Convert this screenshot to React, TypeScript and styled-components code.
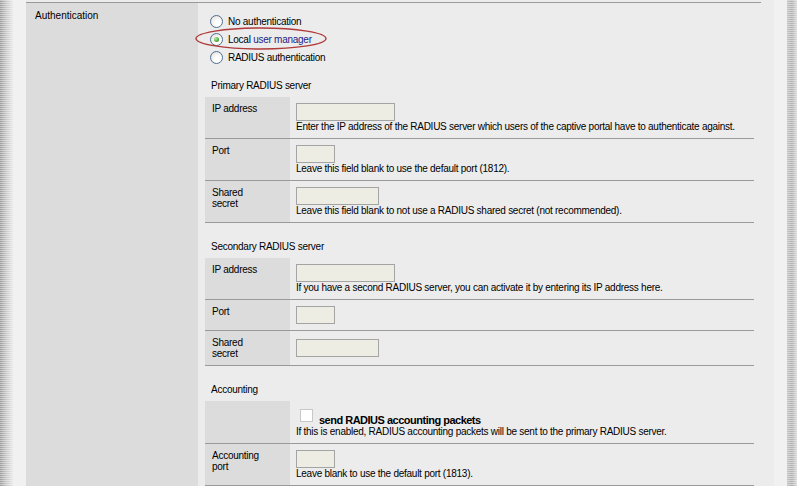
import styled, { createGlobalStyle } from "styled-components";

const GlobalStyle = createGlobalStyle`
  html, body {
    margin: 0;
    padding: 0;
    background: #ececec;
  }
  body {
    font-family: "Liberation Sans", Arial, sans-serif;
    font-size: 10px;
    line-height: 11px;
    letter-spacing: -0.26px;
    color: #000;
  }
`;

const Page = styled.div`
  display: flex;
  height: 486px;
  overflow: hidden;
`;

const Stripe = styled.div<{ $side: "left" | "right" }>`
  flex: none;
  width: ${(p) => (p.$side === "left" ? 13 : 10)}px;
  background: repeating-linear-gradient(
      to bottom,
      rgba(255, 255, 255, 0.4) 0 1px,
      rgba(255, 255, 255, 0) 1px 2px
    ),
    ${(p) =>
      p.$side === "left"
        ? "linear-gradient(to right, #9c9c9c, #c6c6c6 45%, #e8e8e8)"
        : "linear-gradient(to right, #c4c4c4, #b2b2b2 50%, #dadada)"};
`;

const Gutter = styled.div`
  flex: none;
  width: 13px;
  background: #f1f1f1;
`;

const Main = styled.div`
  flex: 1;
  padding: 2px 13px 0 0;
`;

const FormRow = styled.div`
  display: grid;
  grid-template-columns: 172px 1fr;
  border-top: 1px solid #9a9a9a;
`;

const FieldName = styled.div`
  background: #dcdcdc;
  padding: 7px 9px;
  letter-spacing: 0;
`;

const FieldBody = styled.div`
  padding: 9px 7px 0;
`;

const RadioGroup = styled.div`
  position: relative;
`;

const RadioRow = styled.label`
  display: flex;
  align-items: center;
  gap: 5px;
  height: 18px;
  padding-left: 5px;
`;

const RadioDot = styled.span<{ $checked?: boolean }>`
  flex: none;
  width: 13px;
  height: 13px;
  box-sizing: border-box;
  border-radius: 50%;
  border: 1px solid #4d6f93;
  background: radial-gradient(circle at 65% 70%, #ffffff 30%, #dedbd2 100%);
  display: flex;
  align-items: center;
  justify-content: center;

  &::after {
    content: "";
    display: ${(p) => (p.$checked ? "block" : "none")};
    width: 5px;
    height: 5px;
    border-radius: 50%;
    background: radial-gradient(circle at 35% 35%, #b6f0a6, #3c9e2e 70%);
  }
`;

const Link = styled.span`
  color: #1e1e86;
`;

const Highlight = styled.svg`
  position: absolute;
  left: -10px;
  top: 15px;
  overflow: visible;
`;

const SectionTitle = styled.div<{ $gap: number }>`
  margin: ${(p) => p.$gap}px 0 6px 6px;
`;

const InnerTable = styled.div`
  display: flex;
  flex-direction: column;
`;

const InnerRow = styled.div`
  display: grid;
  grid-template-columns: 85px 1fr;
  border-bottom: 1px solid #9a9a9a;
`;

const RowLabel = styled.div`
  background: #dcdcdc;
  padding: 6px 7px;
`;

const RowValue = styled.div`
  padding: 6px;
  display: flex;
  flex-direction: column;
  justify-content: center;
  align-items: flex-start;
`;

const TextInput = styled.input<{ $w: number }>`
  width: ${(p) => p.$w}px;
  height: 18px;
  box-sizing: border-box;
  margin: 0;
  border: 1px solid #a4a4a4;
  background: #eeede4;
  font: inherit;
`;

const Hint = styled.div`
  white-space: nowrap;
`;

const CheckLine = styled.div`
  display: flex;
  align-items: flex-end;
  gap: 6px;
  height: 19px;
  padding-left: 4px;
`;

const CheckBox = styled.span`
  flex: none;
  width: 13px;
  height: 13px;
  box-sizing: border-box;
  margin-bottom: 4px;
  border: 1px solid #c8c8c8;
  background: #fff;
`;

const CheckText = styled.span`
  font-weight: bold;
  font-size: 11px;
  line-height: 12px;
  letter-spacing: -0.5px;
`;

type Row = {
  label: string[];
  width: number;
  hint?: string;
};

const primary: Row[] = [
  {
    label: ["IP address"],
    width: 99,
    hint: "Enter the IP address of the RADIUS server which users of the captive portal have to authenticate against.",
  },
  {
    label: ["Port"],
    width: 39,
    hint: "Leave this field blank to use the default port (1812).",
  },
  {
    label: ["Shared", "secret"],
    width: 83,
    hint: "Leave this field blank to not use a RADIUS shared secret (not recommended).",
  },
];

const secondary: Row[] = [
  {
    label: ["IP address"],
    width: 99,
    hint: "If you have a second RADIUS server, you can activate it by entering its IP address here.",
  },
  { label: ["Port"], width: 39 },
  { label: ["Shared", "secret"], width: 83 },
];

const FieldRows = ({ rows }: { rows: Row[] }) => (
  <InnerTable>
    {rows.map((r, i) => (
      <InnerRow key={i}>
        <RowLabel>
          {r.label.map((l) => (
            <div key={l}>{l}</div>
          ))}
        </RowLabel>
        <RowValue>
          <TextInput type="text" $w={r.width} />
          {r.hint && <Hint>{r.hint}</Hint>}
        </RowValue>
      </InnerRow>
    ))}
  </InnerTable>
);

const App = () => {
  return (
    <>
      <GlobalStyle />
      <Page>
        <Stripe $side="left" />
        <Gutter />
        <Main>
          <FormRow>
            <FieldName>Authentication</FieldName>
            <FieldBody>
              <RadioGroup>
                <RadioRow>
                  <RadioDot />
                  No authentication
                </RadioRow>
                <RadioRow>
                  <RadioDot $checked />
                  <span>
                    Local <Link>user manager</Link>
                  </span>
                </RadioRow>
                <RadioRow>
                  <RadioDot />
                  RADIUS authentication
                </RadioRow>
                <Highlight width="132" height="23" viewBox="0 0 132 23">
                  <ellipse
                    cx="66"
                    cy="11.5"
                    rx="65"
                    ry="10.5"
                    fill="none"
                    stroke="#b03a3a"
                    strokeWidth="1.4"
                  />
                </Highlight>
              </RadioGroup>

              <SectionTitle $gap={14}>Primary RADIUS server</SectionTitle>
              <FieldRows rows={primary} />

              <SectionTitle $gap={18}>Secondary RADIUS server</SectionTitle>
              <FieldRows rows={secondary} />

              <SectionTitle $gap={18}>Accounting</SectionTitle>
              <InnerTable>
                <InnerRow>
                  <RowLabel />
                  <RowValue>
                    <CheckLine>
                      <CheckBox />
                      <CheckText>send RADIUS accounting packets</CheckText>
                    </CheckLine>
                    <Hint>
                      If this is enabled, RADIUS accounting packets will be sent
                      to the primary RADIUS server.
                    </Hint>
                  </RowValue>
                </InnerRow>
                <InnerRow>
                  <RowLabel>
                    <div>Accounting</div>
                    <div>port</div>
                  </RowLabel>
                  <RowValue>
                    <TextInput type="text" $w={39} />
                    <Hint>Leave blank to use the default port (1813).</Hint>
                  </RowValue>
                </InnerRow>
              </InnerTable>
            </FieldBody>
          </FormRow>
        </Main>
        <Gutter />
        <Stripe $side="right" />
      </Page>
    </>
  );
};

export default App;
